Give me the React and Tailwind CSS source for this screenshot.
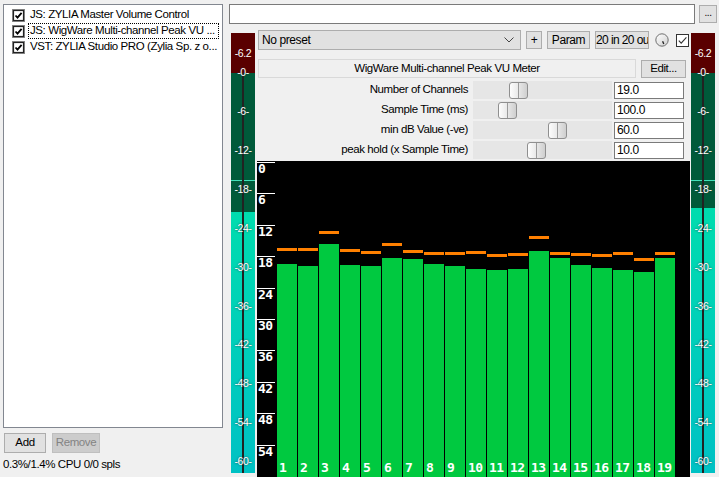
import React from 'react';

const items = [
  { label: 'JS: ZYLIA Master Volume Control' },
  { label: 'JS: WigWare Multi-channel Peak VU ...', focus: true },
  { label: 'VST: ZYLIA Studio PRO (Zylia Sp. z o...' },
];

const params = [
  { label: 'Number of Channels', pos: 36, value: '19.0' },
  { label: 'Sample Time (ms)', pos: 25, value: '100.0' },
  { label: 'min dB Value (-ve)', pos: 75, value: '60.0' },
  { label: 'peak hold (x Sample Time)', pos: 54, value: '10.0' },
];

// [bar top, peak top] in page pixels
const bars = [
  [264, 248], [266, 248], [244, 231], [265, 249], [266, 251], [258, 243], [259, 250],
  [264, 252], [266, 252], [269, 251], [270, 254], [269, 253], [251, 236], [258, 252],
  [265, 253], [268, 254], [270, 252], [272, 258], [258, 252],
];

const scale = ['0', '6', '12', '18', '24', '30', '36', '42', '48', '54'];
const vuLabels = ['-6-', '-12-', '-18-', '-24-', '-30-', '-36-', '-42-', '-48-', '-54-', '-60-'];

const CheckBox = () => (
  <svg width="13" height="13" viewBox="0 0 13 13" className="shrink-0">
    <rect x="0.5" y="0.5" width="12" height="12" fill="#fff" stroke="#8a8a8a" />
    <rect x="1.5" y="1.5" width="10" height="10" fill="#fff" stroke="#222" strokeWidth="1.2" />
    <path d="M3.5 6.5 L5.5 8.7 L9.6 3.8" fill="none" stroke="#000" strokeWidth="1.8" />
  </svg>
);

const VU = ({ teal }) => (
  <div className="relative w-[24px] h-[440px] shrink-0 flex flex-col">
    <div className="h-[40px] bg-[#5a0000]" />
    <div className="bg-[#005a3a] flex flex-col" style={{ height: teal - 40 }}>
      <div className="h-[107px]" />
      <div className="h-px bg-[#3fe0b8]" />
    </div>
    <div className="flex-1 bg-gradient-to-b from-[#00dcae] to-[#00c1c4]" />
    <div className="absolute left-[11px] top-[40px] bottom-0 w-[2px] bg-[#222]" />
    <div className="absolute left-0 right-0 top-[13px] text-center text-[10.5px] leading-[14px] text-white">-6.2</div>
    <div className="absolute left-0 right-0 top-[32px] text-center text-[10.5px] leading-[14px] text-white [text-shadow:0_0_2px_#333]">-0-</div>
    {vuLabels.map((l, i) => (
      <div
        key={l}
        className="absolute left-0 right-0 text-center text-[10.5px] leading-[14px] text-white [text-shadow:0_0_2px_#333]"
        style={{ top: 71 + i * 38.9 }}
      >
        {l}
      </div>
    ))}
  </div>
);

export default function App() {
  return (
    <div className="w-[719px] h-[477px] overflow-hidden bg-[#f0f0f0] flex font-['Liberation_Sans',Arial,sans-serif] text-[11.5px] tracking-[-0.4px] text-black">
      {/* left: fx chain */}
      <div className="w-[229px] shrink-0 flex flex-col">
        <div className="mt-[4px] ml-[3px] w-[220px] h-[424px] bg-white border border-[#828790] pt-[2px]">
          {items.map((it) => (
            <div key={it.label} className="h-[16px] flex items-center pl-[8px]">
              <CheckBox />
              <div
                className={`ml-[3px] h-[16px] w-[191px] flex items-center pl-[1px] whitespace-nowrap overflow-hidden ${it.focus ? 'border border-dotted border-black' : 'border border-transparent'}`}
              >
                {it.label}
              </div>
            </div>
          ))}
        </div>
        <div className="flex gap-[6px] mt-[5px] ml-[4px]">
          <div className="w-[42px] h-[20px] bg-[#e1e1e1] border border-[#adadad] flex items-center justify-center">Add</div>
          <div className="w-[48px] h-[20px] bg-[#cccccc] border border-[#bfbfbf] text-[#838383] flex items-center justify-center">Remove</div>
        </div>
        <div className="mt-[4px] ml-[3px] leading-[14px]">0.3%/1.4% CPU 0/0 spls</div>
      </div>

      {/* right: plugin */}
      <div className="flex-1 flex flex-col">
        <div className="mt-[4px] flex items-center">
          <div className="w-[466px] h-[20px] bg-white border border-[#7a7a7a]" />
          <div className="ml-[4px] w-[18px] h-[18px] bg-[#e1e1e1] border border-[#adadad] flex items-center justify-center text-[10px] leading-none pb-[3px]">...</div>
        </div>

        <div className="mt-[6px] flex items-start">
          <div className="ml-[2px] mt-[3px]"><VU teal={179} /></div>

          <div className="ml-[2px] w-[433px] h-[447px] flex flex-col">
            {/* preset row */}
            <div className="flex items-center h-[20px] pl-[1px] text-[12px]">
              <div className="w-[263px] h-[20px] bg-[#e1e1e1] border border-[#adadad] flex items-center pl-[3px] pr-[6px]">
                <span className="flex-1">No preset</span>
                <svg width="10" height="6" viewBox="0 0 10 6">
                  <path d="M0.5 0.5 L5 5 L9.5 0.5" fill="none" stroke="#444" strokeWidth="1" />
                </svg>
              </div>
              <div className="ml-[5px] w-[16px] h-[18px] bg-[#e1e1e1] border border-[#adadad] flex items-center justify-center">+</div>
              <div className="ml-[5px] w-[43px] h-[18px] bg-[#e1e1e1] border border-[#adadad] flex items-center justify-center">Param</div>
              <div className="ml-[5px] w-[54px] h-[18px] bg-[#e1e1e1] border border-[#adadad] flex items-center overflow-hidden whitespace-nowrap tracking-[-0.6px]">20 in 20 ou</div>
              <svg width="14" height="14" viewBox="0 0 14 14" className="ml-[6px]">
                <defs>
                  <linearGradient id="knob" x1="0" y1="0" x2="1" y2="1">
                    <stop offset="0" stopColor="#ffffff" />
                    <stop offset="1" stopColor="#cfcfcf" />
                  </linearGradient>
                </defs>
                <circle cx="7" cy="7" r="6.2" fill="url(#knob)" stroke="#6f6f6f" strokeWidth="1" />
                <path d="M7.6 8.2 L8.8 11" stroke="#222" strokeWidth="1.3" />
              </svg>
              <div className="ml-[7px] w-[13px] h-[13px] bg-white border border-[#333] flex items-center justify-center">
                <svg width="11" height="11" viewBox="0 0 11 11">
                  <path d="M1.8 5.6 L4.2 8.2 L9.4 2.4" fill="none" stroke="#333" strokeWidth="1.1" />
                </svg>
              </div>
            </div>

            {/* title row */}
            <div className="mt-[9px] flex items-start pl-[1px]">
              <div className="w-[378px] h-[19px] border border-[#d9d9d9] flex items-center justify-center">WigWare Multi-channel Peak VU Meter</div>
              <div className="ml-[5px] mt-[1px] w-[45px] h-[18px] bg-[#e1e1e1] border border-[#adadad] flex items-center justify-center">Edit...</div>
            </div>

            {/* params */}
            <div className="mt-[2px] flex flex-col">
              {params.map((p) => (
                <div key={p.label} className="h-[20px] flex items-center">
                  <div className="w-[212px] text-right pr-[1px] whitespace-nowrap">{p.label}</div>
                  <div className="ml-[4px] w-[139px] h-[18px] bg-[#e6e6e6] flex items-center">
                    <div
                      className="w-[19px] h-[17px] rounded-[3px] border border-[#8f8f8f] bg-gradient-to-r from-[#fdfdfd] via-[#e8e8e8] to-[#cfcfcf] flex justify-center"
                      style={{ marginLeft: p.pos }}
                    >
                      <div className="w-px h-full bg-[#9a9a9a]" />
                    </div>
                  </div>
                  <div className="ml-[2px] w-[70px] h-[17px] bg-white border border-[#7a7a7a] flex items-center pl-[2px] text-[12px]">{p.value}</div>
                </div>
              ))}
            </div>

            {/* meter */}
            <div className="mt-[1px] h-[316px] bg-black flex font-['DejaVu_Sans_Mono',monospace] font-bold text-[13px] tracking-[-0.5px] text-white">
              <div className="w-[18px] shrink-0 pt-[1px] flex flex-col">
                {scale.map((s) => (
                  <div key={s} className="h-[31.4px] shrink-0 border-t border-white leading-[11px] pl-[1px]">{s}</div>
                ))}
              </div>
              <div className="ml-[2px] flex gap-[1px] h-full">
                {bars.map(([top, peak], i) => (
                  <div key={i} className="w-[20px] h-full flex flex-col justify-end">
                    <div className="h-[3px] bg-[#ff8000]" />
                    <div style={{ height: top - peak - 3 }} />
                    <div className="bg-[#00c940] flex items-end pl-[2px] pb-[3px] leading-none" style={{ height: 477 - top }}>
                      {i + 1}
                    </div>
                  </div>
                ))}
              </div>
            </div>
          </div>

          <div className="ml-[1px] mt-[3px]"><VU teal={175} /></div>
        </div>
      </div>
    </div>
  );
}
